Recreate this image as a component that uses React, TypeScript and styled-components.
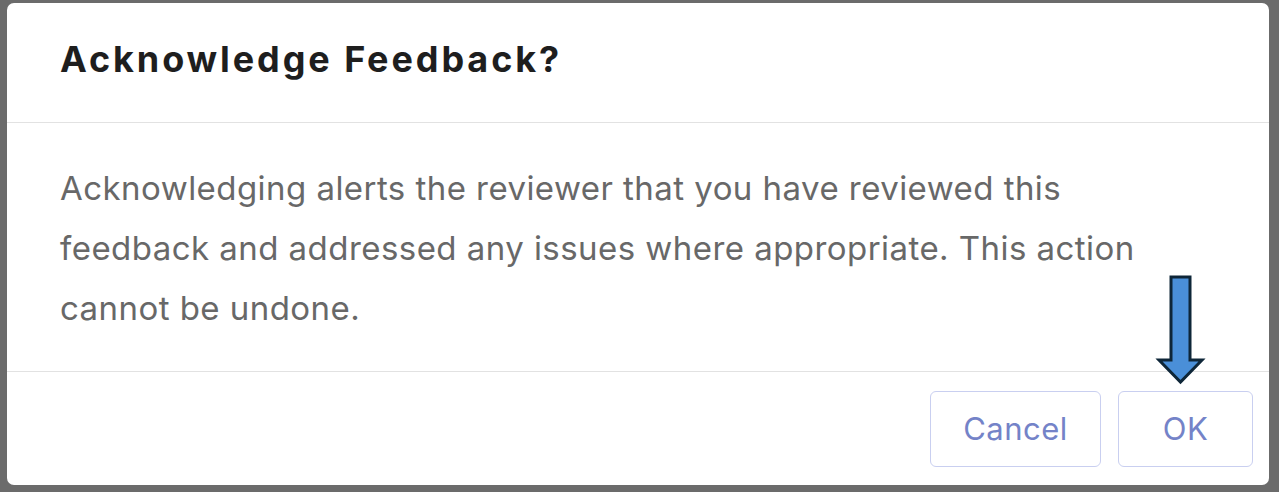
import React from "react";
import styled, { createGlobalStyle } from "styled-components";

const Global = createGlobalStyle`
  html, body { margin: 0; padding: 0; }
  body {
    background: #6b6b6b;
    font-family: Inter, "Liberation Sans", Arial, sans-serif;
    width: 1279px;
    height: 492px;
    overflow: hidden;
  }
`;

const Backdrop = styled.div`
  position: relative;
  box-sizing: border-box;
  width: 1279px;
  height: 492px;
  padding: 3px 10px 7px 7px;
  display: flex;
`;

const Dialog = styled.div`
  flex: 1;
  display: flex;
  flex-direction: column;
  background: #ffffff;
  border-radius: 7px;
  overflow: hidden;
`;

const Header = styled.div`
  height: 120px;
  box-sizing: border-box;
  display: flex;
  align-items: center;
  padding: 0 53px 8px;
  border-bottom: 1px solid #e2e2e2;
`;

const Title = styled.h2`
  margin: 0;
  font-size: 36px;
  font-weight: 700;
  color: #1e1e1e;
  letter-spacing: 2.9px;
`;

const Body = styled.div`
  height: 249px;
  box-sizing: border-box;
  padding: 35px 53px;
  border-bottom: 1px solid #e2e2e2;
`;

const Message = styled.p`
  margin: 0;
  font-size: 33px;
  line-height: 60px;
  color: #686868;
  letter-spacing: 0.45px;
  max-width: 1095px;
`;

const Footer = styled.div`
  flex: 1;
  display: flex;
  justify-content: flex-end;
  align-items: center;
  gap: 17px;
  padding: 0 16px;
`;

const Button = styled.button<{ $w: number }>`
  width: ${(p) => p.$w}px;
  height: 76px;
  box-sizing: border-box;
  background: #ffffff;
  border: 1.5px solid #c9cff0;
  border-radius: 6px;
  font-family: Inter, "Liberation Sans", Arial, sans-serif;
  font-size: 31px;
  letter-spacing: 0.5px;
  color: #7483c8;
  cursor: pointer;
`;

const Arrow = styled.svg`
  position: absolute;
  left: 1155px;
  top: 274px;
`;

export default function App() {
  return (
    <>
      <Global />
      <Backdrop>
        <Dialog>
          <Header>
            <Title>Acknowledge Feedback?</Title>
          </Header>
          <Body>
            <Message>
              Acknowledging alerts the reviewer that you have reviewed this
              feedback and addressed any issues where appropriate. This action
              cannot be undone.
            </Message>
          </Body>
          <Footer>
            <Button $w={171}>Cancel</Button>
            <Button $w={135}>OK</Button>
          </Footer>
        </Dialog>
        <Arrow width="52" height="112" viewBox="0 0 52 112">
          <polygon
            points="16,3 35,3 35,86 47,86 25.5,108 4,86 16,86"
            fill="#4a8fd8"
            stroke="#0e2638"
            strokeWidth="3"
            strokeLinejoin="miter"
          />
        </Arrow>
      </Backdrop>
    </>
  );
}
